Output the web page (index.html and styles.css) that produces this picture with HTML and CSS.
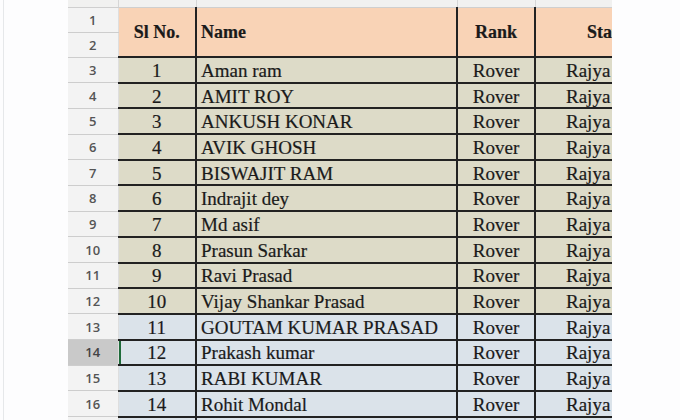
FILE: index.html
```html
<!DOCTYPE html>
<html>
<head>
<meta charset="utf-8">
<link rel="stylesheet" href="styles.css">
</head>
<body>
<div class="page">
  <div class="gutter"></div>
  <div class="sheet">
    <table class="grid">
      <colgroup>
        <col class="w-rh"><col class="w-sl"><col class="w-name"><col class="w-rank"><col class="w-state">
      </colgroup>
      <tr class="colhead"><td class="rh"></td><td class="ch"></td><td class="ch"></td><td class="ch"></td><td class="ch"></td></tr>
      <tr class="hrow"><td class="rh">1</td><th rowspan="2" class="hd c">Sl No.</th><th rowspan="2" class="hd l">Name</th><th rowspan="2" class="hd c">Rank</th><th rowspan="2" class="hd st">State</th></tr>
      <tr class="hrow"><td class="rh">2</td></tr>
      <tr class="tan"><td class="rh">3</td><td class="c">1</td><td class="l">Aman ram</td><td class="c">Rover</td><td class="sv">Rajya</td></tr>
      <tr class="tan"><td class="rh">4</td><td class="c">2</td><td class="l">AMIT ROY</td><td class="c">Rover</td><td class="sv">Rajya</td></tr>
      <tr class="tan"><td class="rh">5</td><td class="c">3</td><td class="l">ANKUSH KONAR</td><td class="c">Rover</td><td class="sv">Rajya</td></tr>
      <tr class="tan"><td class="rh">6</td><td class="c">4</td><td class="l">AVIK GHOSH</td><td class="c">Rover</td><td class="sv">Rajya</td></tr>
      <tr class="tan"><td class="rh">7</td><td class="c">5</td><td class="l">BISWAJIT RAM</td><td class="c">Rover</td><td class="sv">Rajya</td></tr>
      <tr class="tan"><td class="rh">8</td><td class="c">6</td><td class="l">Indrajit dey</td><td class="c">Rover</td><td class="sv">Rajya</td></tr>
      <tr class="tan"><td class="rh">9</td><td class="c">7</td><td class="l">Md asif</td><td class="c">Rover</td><td class="sv">Rajya</td></tr>
      <tr class="tan"><td class="rh">10</td><td class="c">8</td><td class="l">Prasun Sarkar</td><td class="c">Rover</td><td class="sv">Rajya</td></tr>
      <tr class="tan"><td class="rh">11</td><td class="c">9</td><td class="l">Ravi Prasad</td><td class="c">Rover</td><td class="sv">Rajya</td></tr>
      <tr class="tan"><td class="rh">12</td><td class="c">10</td><td class="l">Vijay Shankar Prasad</td><td class="c">Rover</td><td class="sv">Rajya</td></tr>
      <tr class="blue"><td class="rh">13</td><td class="c">11</td><td class="l">GOUTAM KUMAR PRASAD</td><td class="c">Rover</td><td class="sv">Rajya</td></tr>
      <tr class="blue"><td class="rh sel">14</td><td class="c active">12</td><td class="l">Prakash kumar</td><td class="c">Rover</td><td class="sv">Rajya</td></tr>
      <tr class="blue"><td class="rh">15</td><td class="c">13</td><td class="l">RABI KUMAR</td><td class="c">Rover</td><td class="sv">Rajya</td></tr>
      <tr class="blue"><td class="rh">16</td><td class="c">14</td><td class="l">Rohit Mondal</td><td class="c">Rover</td><td class="sv">Rajya</td></tr>
      <tr class="blue"><td class="rh"></td><td class="c"></td><td class="l"></td><td class="c"></td><td class="sv"></td></tr>
    </table>
  </div>
</div>
</body>
</html>
```
FILE: styles.css
```css
html, body {
  margin: 0;
  padding: 0;
  background: #fdfdfe;
  overflow: hidden;
}
.page {
  display: flex;
  width: 680px;
  height: 420px;
  overflow: hidden;
}
.gutter {
  flex: none;
  border-left: 1px solid #e6e8ea;
  margin-left: 3px;
  width: 64px;
}
.sheet {
  width: 544px;
  flex: none;
  overflow: hidden;
  height: 420px;
}
.grid {
  border-collapse: collapse;
  table-layout: fixed;
  width: 640px;
  font-family: "Liberation Serif", "Times New Roman", serif;
  font-size: 19px;
  line-height: 20px;
  color: #1a1a1a;
  -webkit-text-stroke: 0.2px #1a1a1a;
}
.w-rh { width: 50px; }
.w-sl { width: 78px; }
.w-name { width: 261px; }
.w-rank { width: 78px; }
.w-state { width: 173px; }
.grid td, .grid th {
  padding: 0;
  white-space: nowrap;
  overflow: hidden;
}
.colhead { height: 7px; }
.colhead td {
  background: #f1f1f0;
  border-right: 1px solid #d6d6d6;
  border-bottom: 1px solid #cfcfcf;
}
.hrow { height: 25px; }
.tan, .blue { height: 25.7px; }
.rh {
  background: #f3f3f3;
  color: #555;
  -webkit-text-stroke: 0;
  font-family: "Open Sans", "Liberation Sans", sans-serif;
  font-size: 13px;
  line-height: 16px;
  font-weight: 600;
  text-align: center;
  border-bottom: 1px solid #cdcdcd;
  border-right: 1px solid #dedede;
  vertical-align: middle;
}
.rh.sel { background: #c9c9c9; color: #444; }
.hd {
  background: #f9d3b6;
  font-weight: bold;
  font-size: 18px;
  border-right: 2px solid #222;
  border-bottom: 2px solid #222;
  vertical-align: middle;
}
.tan td:not(.rh), .blue td:not(.rh) {
  border-right: 2px solid #222;
  border-bottom: 2px solid #222;
  vertical-align: middle;
  padding-top: 2px;
}
.tan td:not(.rh) { background: #dddbc8; }
.blue td:not(.rh) { background: #dbe3ea; }
.c { text-align: center; }
.l { text-align: left; padding-left: 4px !important; }
.st { text-align: left; padding-left: 51px !important; }
.sv { text-align: left; padding-left: 30px !important; }
.active { box-shadow: inset 2px 0 0 #1f6b3a; }
```
